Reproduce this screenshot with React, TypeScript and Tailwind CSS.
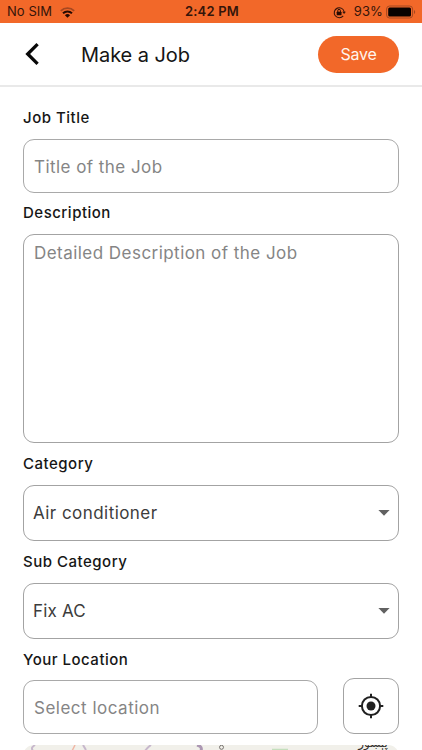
import React from "react";

function Label({ children, className }: { children: React.ReactNode; className: string }) {
  return (
    <div className={`flex items-center text-[15px] font-medium tracking-[0.5px] text-[#161616] whitespace-nowrap ${className}`}>
      {children}
    </div>
  );
}

function Select({ value, spacing }: { value: string; spacing: string }) {
  return (
    <div className="flex h-14 items-center justify-between rounded-[11px] border border-[#a3a3a3] pl-[9px] pr-2">
      <span className={`whitespace-nowrap text-[17px] leading-6 text-[#3c3c3c] ${spacing}`}>{value}</span>
      <svg width="12" height="6" viewBox="0 0 12 6" fill="#616161">
        <path d="M.4 0h11.2L6 5.8z" />
      </svg>
    </div>
  );
}

function StatusBar() {
  return (
    <div className="grid h-[23px] shrink-0 grid-cols-3 items-center bg-[#f26829] pt-px text-[13px] text-[#35150a]">
      <div className="flex items-center gap-2 pl-[7px]">
        <span className="tracking-[0.05px]">No SIM</span>
        <svg width="15" height="11" viewBox="0 0 15 11" fill="none" strokeWidth="1.8">
          <path d="M.8 3.9a9.6 9.6 0 0 1 13.4 0" stroke="#a64820" />
          <path d="M3 6.3a6.5 6.5 0 0 1 9 0" stroke="#260b03" strokeWidth="2" />
          <path d="M7.5 10.8 4.9 8.2a3.8 3.8 0 0 1 5.2 0z" fill="#260b03" />
        </svg>
      </div>
      <div className="pl-[2px] text-center font-semibold tracking-[0.2px]">2:42 PM</div>
      <div className="flex items-center justify-end pr-[6px]">
        <svg className="mr-[8px]" width="13" height="13" viewBox="0 0 13 13" fill="none">
          <path d="M10.2 9.8A5 5 0 1 1 11.2 6" stroke="#35150a" strokeWidth="1.1" />
          <path d="M9.2 5.7h3.7l-1.8 2.3z" fill="#35150a" />
          <rect x="3.7" y="5.7" width="4.8" height="3.5" rx=".5" fill="#260b03" />
          <path d="M4.8 6V4.6a1.3 1.3 0 0 1 2.6 0V6" stroke="#260b03" />
        </svg>
        <span className="mr-[3px] tracking-[0.1px]">93%</span>
        <svg width="30" height="14" viewBox="0 0 30 14">
          <rect x=".6" y="1" width="26" height="12" rx="3" fill="none" stroke="#a64820" />
          <rect x="2.2" y="2.6" width="22.8" height="8.8" rx="1.5" fill="#080200" />
          <path d="M28 5c1.6.8 1.6 3.2 0 4z" fill="#a64820" />
        </svg>
      </div>
    </div>
  );
}

export default function App() {
  return (
    <div className="flex h-[750px] w-[422px] flex-col overflow-hidden bg-white font-['Inter','Liberation_Sans',sans-serif]">
      <StatusBar />
      <header className="flex h-16 shrink-0 items-center border-b-2 border-[#e9e9e9] pl-[25px] pr-[23px]">
        <svg width="14" height="22" viewBox="0 0 14 22" fill="none" stroke="#080808" strokeWidth="3.3">
          <path d="M12.6 1.2 2.7 11l9.9 9.8" />
        </svg>
        <h1 className="ml-[42px] whitespace-nowrap pt-px text-[20px] tracking-[-0.08px] text-[#151515]">Make a Job</h1>
        <button className="ml-auto flex h-[37px] w-[81px] items-center justify-center rounded-full bg-[#f26829] text-[16px] tracking-[-0.25px] text-[#fff5ed]">
          Save
        </button>
      </header>
      <main className="flex flex-col px-[23px]">
        <Label className="mt-[19px] h-[24px] pt-px">Job Title</Label>
        <div className="mt-[9px] flex h-[54px] items-center rounded-[11px] border border-[#a9a9a9] pl-[10px] pt-[3px] text-[17px] tracking-[0.45px] text-[#858585]">
          Title of the Job
        </div>
        <Label className="h-[41px]">Description</Label>
        <div className="h-[209px] rounded-[11px] border border-[#a3a3a3] pl-[10px] pt-[6px] text-[17px] leading-6 tracking-[0.46px] text-[#858585]">
          Detailed Description of the Job
        </div>
        <Label className="h-[42px]">Category</Label>
        <Select value="Air conditioner" spacing="tracking-[0.45px]" />
        <Label className="h-[42px]">Sub Category</Label>
        <Select value="Fix AC" spacing="tracking-[0.2px]" />
        <Label className="h-[39px] pt-[4px]">Your Location</Label>
        <div className="flex items-end gap-[25px]">
          <div className="flex h-[54px] w-[295px] items-center rounded-[11px] border border-[#a9a9a9] pl-[10px] pt-[3px] text-[17px] tracking-[0.5px] text-[#858585]">
            Select location
          </div>
          <div className="flex h-14 w-14 items-center justify-center rounded-[11px] border border-[#a3a3a3]">
            <svg width="26" height="26" viewBox="0 0 26 26" fill="none" stroke="#202020" strokeWidth="2">
              <circle cx="13" cy="13" r="9.1" />
              <circle cx="13" cy="13" r="4.5" fill="#202020" stroke="none" />
              <path d="M13 .7v3.5M13 21.8v3.5M.7 13h3.5M21.8 13h3.5" />
            </svg>
          </div>
        </div>
        <div className="mt-[11px] h-[60px] overflow-hidden rounded-[11px] bg-[#f1f0ea]">
          <svg width="376" height="60" viewBox="0 0 376 60" fill="none">
            <path d="M12 0c-3 2-4 3-2 6M60 0l3 5M122 6c2-3 3-4 6-6" stroke="#c7b8cc" strokeWidth="2" />
            <path d="M52 0l-3 6" stroke="#efb6a5" strokeWidth="1.5" />
            <path d="M174 0c4 1 5 3 4 6" stroke="#ac98b3" strokeWidth="3" />
            <circle cx="198.5" cy="2.3" r="2" stroke="#77736f" />
            <path d="M249 4.5h16" stroke="#c4dfbd" strokeWidth="1.5" />
            <text x="350" y="2" textAnchor="middle" fill="#35322f" fontSize="12" fontFamily="DejaVu Sans">
              پېښور
            </text>
          </svg>
        </div>
      </main>
    </div>
  );
}
